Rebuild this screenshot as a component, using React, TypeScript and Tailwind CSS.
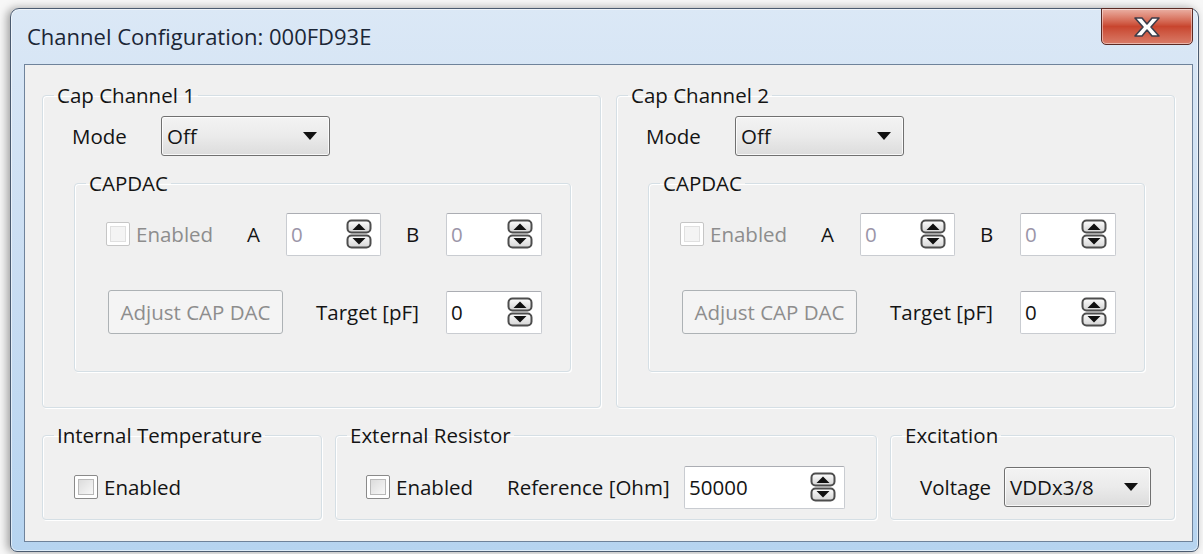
import React from "react";

const FONT = "font-['Open_Sans',_'Noto_Sans',_sans-serif]";

type SpinProps = { value: string; disabled?: boolean; width?: string };

// Win7 style up/down glyph pair
function SpinGlyph() {
  return (
    <svg width="26" height="30" viewBox="0 0 26 30" className="shrink-0">
      <defs>
        <linearGradient id="spinFill" x1="0" y1="0" x2="0" y2="1">
          <stop offset="0" stopColor="#fdfdfd" />
          <stop offset="1" stopColor="#d4d4d4" />
        </linearGradient>
      </defs>
      <rect x="1.5" y="1.5" width="23" height="12" rx="4" fill="url(#spinFill)" stroke="#4d4d4d" strokeWidth="2" />
      <rect x="1.5" y="16.5" width="23" height="12" rx="4" fill="url(#spinFill)" stroke="#4d4d4d" strokeWidth="2" />
      <path d="M13 4.5 L19.5 11 L6.5 11 Z" fill="#111" />
      <path d="M13 25.5 L19.5 19 L6.5 19 Z" fill="#111" />
    </svg>
  );
}

function SpinBox({ value, disabled, width = "w-[96px]" }: SpinProps) {
  return (
    <div
      className={`${width} h-[43px] flex items-center justify-between bg-white rounded-[2px] border border-[#c9ccd1] border-t-[#abadb3] pl-[4px] pr-[8px]`}
    >
      <span className={disabled ? "text-[#9b95a8]" : "text-[#141414]"}>{value}</span>
      <SpinGlyph />
    </div>
  );
}

function CheckBox({ disabled }: { disabled?: boolean }) {
  return (
    <span
      className={`w-[24px] h-[24px] shrink-0 rounded-[2px] border ${
        disabled ? "border-[#c6c6c6]" : "border-[#8a8a8a]"
      } bg-white p-[3px]`}
    >
      <span
        className={`block w-full h-full border ${
          disabled ? "border-[#e0e0e0] bg-[#f4f4f4]" : "border-[#b9b9b9] bg-gradient-to-br from-[#dcdcdc] to-[#f8f8f8]"
        }`}
      />
    </span>
  );
}

function Select({ value, width }: { value: string; width: string }) {
  return (
    <div
      className={`${width} h-[40px] flex items-center justify-between rounded-[3px] border border-[#707070] bg-gradient-to-b from-[#f3f3f3] via-[#ebebeb] to-[#dcdcdc] pl-[5px] pr-[12px] shadow-[inset_0_0_0_1px_rgba(255,255,255,0.8)]`}
    >
      <span className="text-[#141414]">{value}</span>
      <svg width="14" height="8" viewBox="0 0 14 8">
        <path d="M0 0 H14 L7 8 Z" fill="#111" />
      </svg>
    </div>
  );
}

// group box: legend sits on the top rule, body padding goes on the inner div
function Group({
  title,
  className,
  bodyClass,
  children,
}: {
  title: string;
  className?: string;
  bodyClass?: string;
  children: React.ReactNode;
}) {
  return (
    <fieldset
      className={`border border-[#d5dfe5] rounded-[4px] shadow-[inset_1px_1px_0_#ffffff,1px_1px_0_#ffffff] min-w-0 ${className ?? ""}`}
    >
      <legend className="ml-[11px] px-[3px] leading-[26px] text-[#141414]">{title}</legend>
      <div className={bodyClass}>{children}</div>
    </fieldset>
  );
}

function CapChannel({ n }: { n: number }) {
  return (
    <Group title={`Cap Channel ${n}`} className="flex-1 h-[326px]" bodyClass="px-[29px]">
      <div className="flex items-center mt-[8px] h-[40px]">
        <span className="w-[89px] text-[#141414]">Mode</span>
        <Select value="Off" width="w-[169px]" />
      </div>
      <Group title="CAPDAC" className="mt-[14px] ml-[2px] h-[202px]" bodyClass="pl-[31px]">
        <div className="flex items-center mt-[16px] h-[44px]">
          <div className="w-[141px] flex items-center gap-[6px]">
            <CheckBox disabled />
            <span className="text-[#8d8d8d]">Enabled</span>
          </div>
          <span className="w-[39px] text-[#141414]">A</span>
          <SpinBox value="0" disabled width="w-[95px]" />
          <span className="ml-[25px] w-[40px] text-[#141414]">B</span>
          <SpinBox value="0" disabled />
        </div>
        <div className="flex items-center mt-[34px] h-[44px]">
          <div className="ml-[2px] w-[175px] h-[44px] flex items-center justify-center rounded-[3px] border border-[#adb2b5] bg-[#f4f4f4] text-[#8d8d8d]">
            Adjust CAP DAC
          </div>
          <span className="ml-[33px] w-[130px] text-[#141414]">Target [pF]</span>
          <SpinBox value="0" />
        </div>
      </Group>
    </Group>
  );
}

export default function App() {
  return (
    <div className={`w-[1203px] h-[554px] bg-[#f7f7f7] pt-[8px] pl-[10px] pr-[4px] pb-[2px] text-[20.5px] ${FONT}`}>
      <div className="h-full flex flex-col rounded-t-[9px] rounded-b-[7px] border border-[#4b5b70] bg-gradient-to-b from-[#dbe8f6] via-[#c9ddf2] to-[#b6d4f0] shadow-[-3px_0_8px_rgba(0,0,0,0.35),inset_0_0_0_1px_rgba(255,255,255,0.55)] pl-[13px] pr-[5px] pb-[9px]">
        {/* title bar */}
        <div className="h-[55px] flex items-start justify-between">
          <span className="mt-[11px] ml-[3px] text-[22px] text-[#1b2636]">Channel Configuration: 000FD93E</span>
          <div className="w-[92px] h-[37px] -mt-px flex items-center justify-center rounded-b-[5px] border border-[#5b2a24] bg-gradient-to-b from-[#eab0a4] via-[#c8452e] to-[#d97b68] shadow-[inset_0_0_0_1px_rgba(255,255,255,0.45)]">
            <svg width="32" height="24" viewBox="0 0 32 24">
              <path
                d="M4 3 L11 3 L16 9 L21 3 L28 3 L20 12 L28 21 L21 21 L16 15 L11 21 L4 21 L12 12 Z"
                fill="#ffffff"
                stroke="#3d3d4a"
                strokeWidth="1.6"
                strokeLinejoin="round"
              />
            </svg>
          </div>
        </div>

        {/* client area */}
        <div className="flex-1 bg-[#f0f0f0] border border-[#6f839b] px-[17px] pt-[17px]">
          <div className="flex gap-[15px]">
            <CapChannel n={1} />
            <CapChannel n={2} />
          </div>

          <div className="flex gap-[13px] mt-[14px]">
            <Group title="Internal Temperature" className="w-[280px] h-[98px]" bodyClass="pl-[31px]">
              <div className="flex items-center gap-[6px] mt-[18px] h-[42px]">
                <CheckBox />
                <span className="text-[#141414]">Enabled</span>
              </div>
            </Group>
            <Group title="External Resistor" className="w-[542px] h-[98px]" bodyClass="pl-[30px]">
              <div className="flex items-center mt-[18px] h-[42px]">
                <div className="w-[141px] flex items-center gap-[6px]">
                  <CheckBox />
                  <span className="text-[#141414]">Enabled</span>
                </div>
                <span className="w-[177px] text-[#141414]">Reference [Ohm]</span>
                <SpinBox value="50000" width="w-[161px]" />
              </div>
            </Group>
            <Group title="Excitation" className="flex-1 h-[98px]" bodyClass="pl-[29px]">
              <div className="flex items-center mt-[18px] h-[42px]">
                <span className="w-[84px] text-[#141414]">Voltage</span>
                <Select value="VDDx3/8" width="w-[147px]" />
              </div>
            </Group>
          </div>
        </div>
      </div>
    </div>
  );
}
